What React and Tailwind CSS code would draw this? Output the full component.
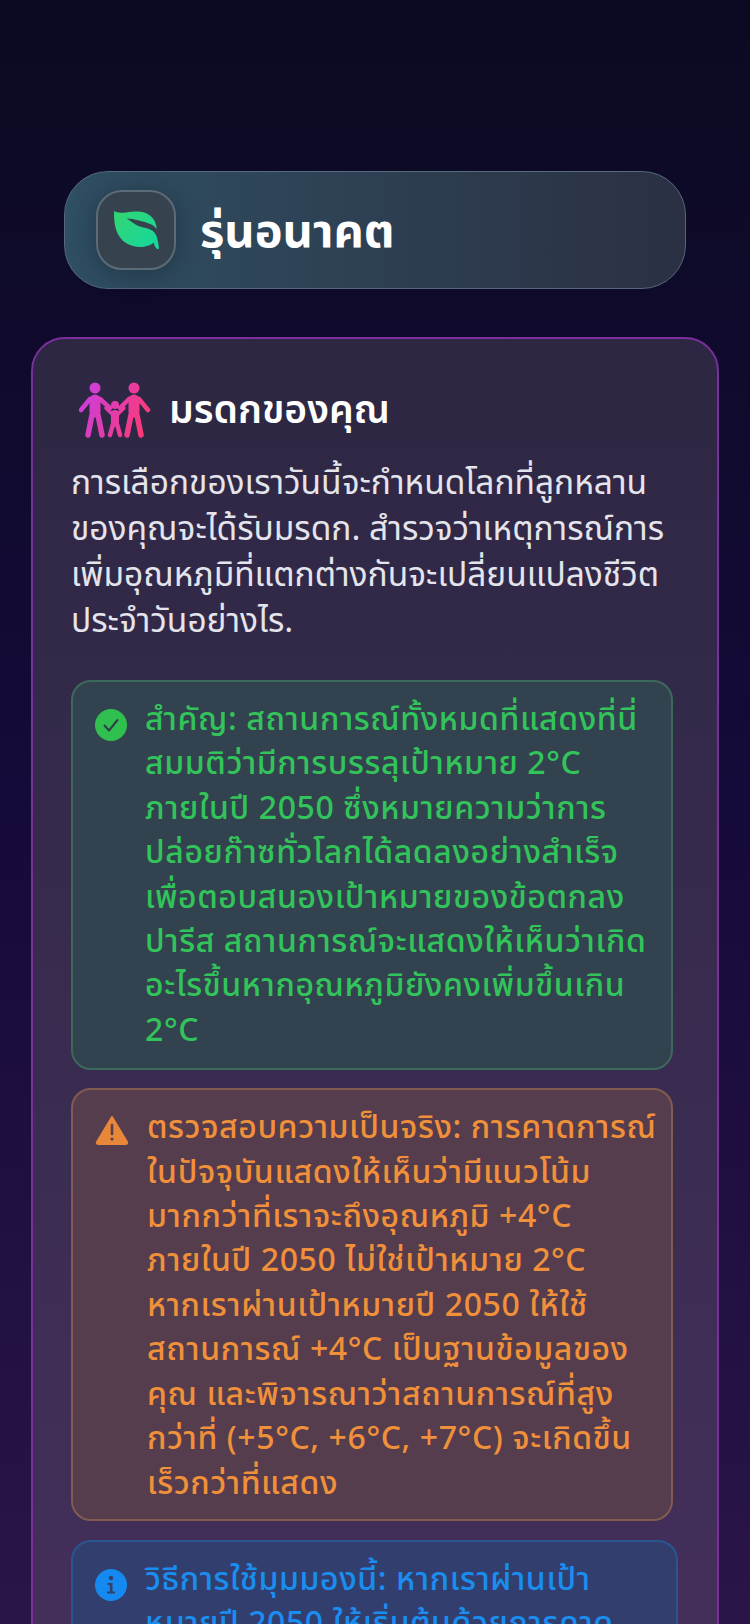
const FONT = "font-['Noto_Sans_Thai','Noto_Sans','Liberation_Sans',sans-serif]"

const Leaf = () => (
  <svg width="50" height="46" viewBox="0 0 48 48" preserveAspectRatio="none">
    <defs>
      <linearGradient id="leafGrad" x1="0" y1="0" x2="1" y2="1">
        <stop offset="0" stopColor="#34d670" />
        <stop offset="1" stopColor="#14d6a0" />
      </linearGradient>
    </defs>
    <path d="M3 4 C6 7 12 6 20 5 C33 3 43 9 44 23 C40 17 33 16 27 14 C22 13 19 12 15 12 C20 15 24 20 30 21 C36 22 42 24 44 31 C45 36 46 40 46 44 C43 44 42 41 41 37 C37 41 29 43 22 41 C10 38 2 27 3 4 Z" fill="url(#leafGrad)" />
  </svg>
)

const Family = () => (
  <svg width="72" height="56" viewBox="0 0 72 56" fill="none" strokeLinecap="round">
    <defs>
      <linearGradient id="famGrad" gradientUnits="userSpaceOnUse" x1="0" y1="0" x2="72" y2="30">
        <stop offset="0" stopColor="#c63fe8" />
        <stop offset="1" stopColor="#fb3a78" />
      </linearGradient>
    </defs>
    <g fill="url(#famGrad)">
      <circle cx="16" cy="6" r="5.5" />
      <circle cx="55" cy="6" r="5.5" />
      <circle cx="36" cy="23" r="4" />
    </g>
    <g stroke="url(#famGrad)" strokeLinejoin="round">
      <path d="M16 18 L16 30" strokeWidth="11" />
      <path d="M13 33 L9 53 M19 33 L23 53" strokeWidth="5.5" />
      <path d="M11 17 L2 28 M21 17 L31 26" strokeWidth="4.5" />
      <path d="M55 18 L55 30" strokeWidth="11" />
      <path d="M52 33 L48 53 M58 33 L62 53" strokeWidth="5.5" />
      <path d="M60 17 L69 28 M50 17 L41 26" strokeWidth="4.5" />
      <path d="M36 32 L36 41" strokeWidth="8" />
      <path d="M34 42 L31 53 M38 42 L41 53" strokeWidth="4.5" />
      <path d="M33 32 L27 26 M39 32 L45 26" strokeWidth="3.5" />
    </g>
  </svg>
)

const CheckIcon = () => (
  <svg width="32" height="32" viewBox="0 0 32 32">
    <circle cx="16" cy="16" r="16" fill="#30c050" />
    <path d="M9.5 16.5 L14 21.5 L22.5 11" fill="none" stroke="#2f3d4a" strokeWidth="2" strokeLinecap="round" strokeLinejoin="round" />
  </svg>
)

const WarnIcon = () => (
  <svg className="-mt-[3px]" width="34" height="32" viewBox="0 0 34 32">
    <path d="M17 3 L32 28 Q33 30 30 30 L4 30 Q1 30 2 28 Z" fill="#e8863a" stroke="#e8863a" strokeWidth="2" strokeLinejoin="round" />
    <path d="M17 11 L17 20" stroke="#54404e" strokeWidth="2.6" strokeLinecap="round" />
    <circle cx="17" cy="25" r="1.6" fill="#54404e" />
  </svg>
)

const InfoIcon = () => (
  <svg width="32" height="32" viewBox="0 0 32 32">
    <circle cx="16" cy="16" r="16" fill="#1589f0" />
    <circle cx="16" cy="9" r="2.2" fill="#33406e" />
    <path d="M12.5 14 H17.5 V22.5 H20 V24.5 H12 V22.5 H14.8 V16 H12.5 Z" fill="#33406e" />
  </svg>
)

const Note = ({ box, text, icon, children }) => (
  <div className={`flex items-start gap-[18px] rounded-[20px] border-2 pl-[22px] pt-[16px] ${box}`}>
    <div className="mt-[11px] shrink-0">{icon}</div>
    <p className={`whitespace-nowrap text-[32px] leading-[44.4px] font-medium tracking-[0.6px] ${text}`}>{children}</p>
  </div>
)

export default function App() {
  return (
    <div className={`${FONT} h-[1624px] w-[750px] overflow-hidden bg-gradient-to-b from-[#0b0a22] via-[#160a3a] to-[#2a1548] pt-[171px]`}>
      <div className="mx-[64px] flex h-[118px] items-center gap-[24px] rounded-[44px] border border-[#55687c] bg-gradient-to-r from-[#2f4f63] to-[#2b3043] pl-[31px]">
        <div className="flex h-[80px] w-[80px] items-center justify-center rounded-[26px] border-2 border-[#5c6b78] bg-[#36434f] shadow-[0_4px_24px_rgba(20,30,45,0.45)]">
          <Leaf />
        </div>
        <h1 className="mt-[6px] text-[47px] font-bold text-white">รุ่นอนาคต</h1>
      </div>

      <div className="mx-[31px] mt-[48px] rounded-[34px] border-2 border-[#7b2f9c] bg-gradient-to-b from-[#2d2743] to-[#45305c] pl-[38px] pr-[44px] pt-[40px] pb-[40px]">
        <div className="flex items-center gap-[18px] pl-[8px]">
          <Family />
          <h2 className="mt-[5px] text-[39px] font-semibold leading-[56px] text-white">มรดกของคุณ</h2>
        </div>
        <p className="mt-[21px] whitespace-nowrap text-[33.5px] leading-[46px] text-[#e4e4ec]">
          การเลือกของเราวันนี้จะกำหนดโลกที่ลูกหลาน<br />
          ของคุณจะได้รับมรดก. สำรวจว่าเหตุการณ์การ<br />
          เพิ่มอุณหภูมิที่แตกต่างกันจะเปลี่ยนแปลงชีวิต<br />
          ประจำวันอย่างไร.
        </p>

        <div className="mt-[35px] flex flex-col gap-[18px]">
          <Note box="pb-[15px] border-[#3b6a5c] bg-[#33424f]" text="text-[#32c45a]" icon={<CheckIcon />}>
            สำคัญ: สถานการณ์ทั้งหมดที่แสดงที่นี่<br />
            สมมติว่ามีการบรรลุเป้าหมาย 2°C<br />
            ภายในปี 2050 ซึ่งหมายความว่าการ<br />
            ปล่อยก๊าซทั่วโลกได้ลดลงอย่างสำเร็จ<br />
            เพื่อตอบสนองเป้าหมายของข้อตกลง<br />
            ปารีส สถานการณ์จะแสดงให้เห็นว่าเกิด<br />
            อะไรขึ้นหากอุณหภูมิยังคงเพิ่มขึ้นเกิน<br />
            2°C
          </Note>
          <Note box="pb-[13px] border-[#835a50] bg-[#553d4d]" text="text-[#f0903a]" icon={<WarnIcon />}>
            ตรวจสอบความเป็นจริง: การคาดการณ์<br />
            ในปัจจุบันแสดงให้เห็นว่ามีแนวโน้ม<br />
            มากกว่าที่เราจะถึงอุณหภูมิ +4°C<br />
            ภายในปี 2050 ไม่ใช่เป้าหมาย 2°C<br />
            หากเราผ่านเป้าหมายปี 2050 ให้ใช้<br />
            สถานการณ์ +4°C เป็นฐานข้อมูลของ<br />
            คุณ และพิจารณาว่าสถานการณ์ที่สูง<br />
            กว่าที่ (+5°C, +6°C, +7°C) จะเกิดขึ้น<br />
            เร็วกว่าที่แสดง
          </Note>
          <Note box="mt-[1px] mr-[-5px] pb-[13px] border-[#2a5590] bg-[#323f6e]" text="text-[#1a8df0]" icon={<InfoIcon />}>
            วิธีการใช้มุมมองนี้: หากเราผ่านเป้า<br />
            หมายปี 2050 ให้เริ่มต้นด้วยการคาด
          </Note>
        </div>
      </div>
    </div>
  )
}
